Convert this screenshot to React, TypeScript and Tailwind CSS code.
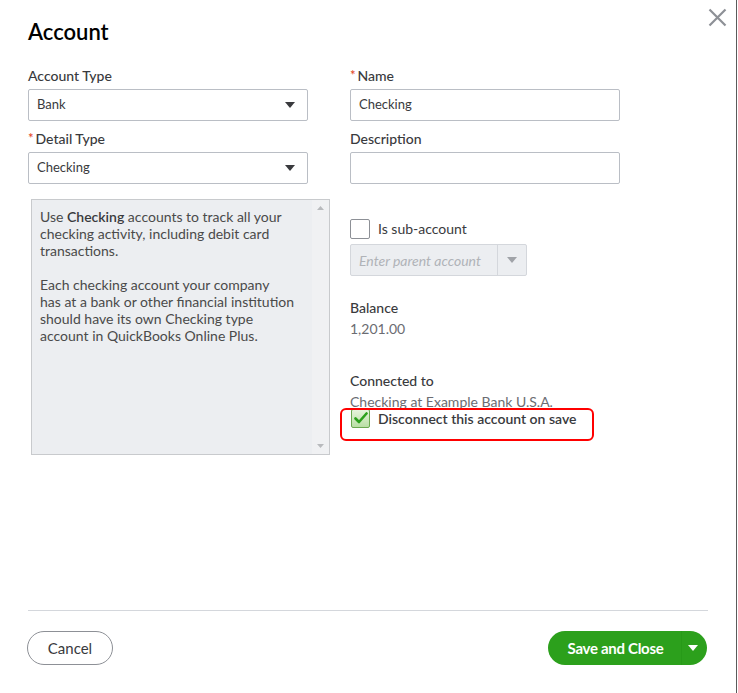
import React from "react";

const font = { fontFamily: "Lato, 'Open Sans', sans-serif" };

function Caret({ className = "" }: { className?: string }) {
  return (
    <svg width="10" height="6" viewBox="0 0 10 6" className={className}>
      <path d="M0 0 L10 0 L5 6 Z" fill="currentColor" />
    </svg>
  );
}

function Label({ children, req = false }: { children: React.ReactNode; req?: boolean }) {
  return (
    <div className="h-5 flex items-center text-[14px] font-medium text-[#393a3d] leading-5">
      {req && <span className="text-[#e2401c] text-[13px] mr-[2px] -mt-[2px]">*</span>}
      {children}
    </div>
  );
}

function Select({ value }: { value: string }) {
  return (
    <div className="mt-[3px] h-8 w-[280px] border border-[#babec5] rounded-[2px] flex items-center justify-between pl-[8px] pr-[12px] text-[13px] text-[#393a3d]">
      <span>{value}</span>
      <Caret className="text-[#393a3d]" />
    </div>
  );
}

function Input({ value = "" }: { value?: string }) {
  return (
    <div className="mt-[3px] h-8 w-[270px] border border-[#babec5] rounded-[2px] flex items-center pl-[8px] text-[13px] text-[#393a3d]">
      {value}
    </div>
  );
}

export default function App() {
  return (
    <div style={font} className="relative w-[738px] h-[693px] bg-white overflow-hidden">
      <div className="absolute right-[1px] top-0 w-[1px] h-full bg-[#5a5a5a]" />
      <button className="absolute left-[707px] top-[7px] w-[20px] h-[20px] flex items-center justify-center text-[#8d9096]">
        <svg width="19" height="19" viewBox="0 0 19 19">
          <path d="M1.5 1.5 L17.5 17.5 M17.5 1.5 L1.5 17.5" stroke="currentColor" strokeWidth="2.2" />
        </svg>
      </button>

      <div className="pl-[28px] pt-[18px]">
        <h1 className="text-[22px] leading-[28px] font-semibold text-[#000]">Account</h1>

        <div className="flex mt-[20px]">
          <div className="w-[322px]">
            <Label>Account Type</Label>
            <Select value="Bank" />
            <div className="mt-[8px]">
              <Label req>Detail Type</Label>
            </div>
            <Select value="Checking" />
            <div className="mt-[15px] ml-[3px] w-[299px] h-[256px] border border-[#c8cacd] bg-[#eceef1] flex">
              <div className="flex-1 pl-[8px] pt-[8px] text-[14px] leading-[17px] text-[#4a4a4a]">
                <p>
                  Use <span className="font-semibold text-[#393a3d]">Checking</span> accounts to track all your
                  <br />
                  checking activity, including debit card
                  <br />
                  transactions.
                </p>
                <p className="mt-[17px]">
                  Each checking account your company
                  <br />
                  has at a bank or other financial institution
                  <br />
                  should have its own Checking type
                  <br />
                  account in QuickBooks Online Plus.
                </p>
              </div>
              <div className="w-[17px] bg-[#f0f1f3] flex flex-col justify-between items-center py-[6px] text-[#b8babd]">
                <svg width="7" height="4" viewBox="0 0 7 4"><path d="M0 4 L7 4 L3.5 0 Z" fill="currentColor" /></svg>
                <svg width="7" height="4" viewBox="0 0 7 4"><path d="M0 0 L7 0 L3.5 4 Z" fill="currentColor" /></svg>
              </div>
            </div>
          </div>

          <div className="w-[270px]">
            <Label req>Name</Label>
            <Input value="Checking" />
            <div className="mt-[8px]">
              <Label>Description</Label>
            </div>
            <Input />

            <div className="mt-[34px] flex items-center">
              <div className="w-[20px] h-[20px] border border-[#8d9096] rounded-[2px] bg-white" />
              <span className="ml-[8px] text-[14px] text-[#393a3d]">Is sub-account</span>
            </div>
            <div className="mt-[5px] w-[177px] h-8 border border-[#d4d7dc] rounded-[2px] bg-[#eceef1] flex">
              <div className="flex-1 flex items-center pl-[8px] text-[14px] italic text-[#b0b3b8]">Enter parent account</div>
              <div className="w-[29px] border-l border-[#d4d7dc] flex items-center justify-center text-[#a0a3a8]">
                <Caret />
              </div>
            </div>

            <div className="mt-[22px]">
              <Label>Balance</Label>
              <div className="mt-[1px] text-[14px] leading-5 text-[#6b6c72]">1,201.00</div>
            </div>

            <div className="mt-[32px]">
              <Label>Connected to</Label>
              <div className="mt-[1px] text-[14px] leading-5 text-[#6b6c72]">Checking at Example Bank U.S.A.</div>
              <div className="flex items-center mt-[-4px] h-[20px]">
                <div className="ml-[1px] w-[19px] h-[19px] border border-[#6aa84f] rounded-[2px] bg-gradient-to-b from-[#e6f4dc] to-[#b9dea4] flex items-center justify-center">
                  <svg width="14" height="12" viewBox="0 0 14 12">
                    <path d="M1.5 6.5 L5 10 L12.5 1.5" stroke="#2ca01c" strokeWidth="2.6" fill="none" strokeLinecap="round" strokeLinejoin="round" />
                  </svg>
                </div>
                <span className="ml-[8px] text-[14px] font-semibold text-[#393a3d]">Disconnect this account on save</span>
              </div>
            </div>
          </div>
        </div>
      </div>

      <div className="absolute left-[340px] top-[408px] w-[254px] h-[33px] border-2 border-[#ff0000] rounded-[6px]" />

      <div className="absolute left-[28px] top-[610px] w-[680px] h-[1px] bg-[#d4d7dc]" />
      <div className="absolute left-[27px] top-[631px] w-[680px] flex justify-between">
        <button className="h-[34px] w-[86px] rounded-full border border-[#8d9096] bg-white text-[15px] text-[#393a3d]">Cancel</button>
        <div className="h-[34px] w-[159px] rounded-full bg-[#2ca01c] flex items-center text-white">
          <span className="flex-1 text-center pl-[2px] text-[15px] font-bold tracking-[-0.3px]">Save and Close</span>
          <div className="w-[26px] h-full border-l border-[#279a18] flex items-center justify-center pr-[4px]">
            <Caret className="text-white" />
          </div>
        </div>
      </div>
    </div>
  );
}
